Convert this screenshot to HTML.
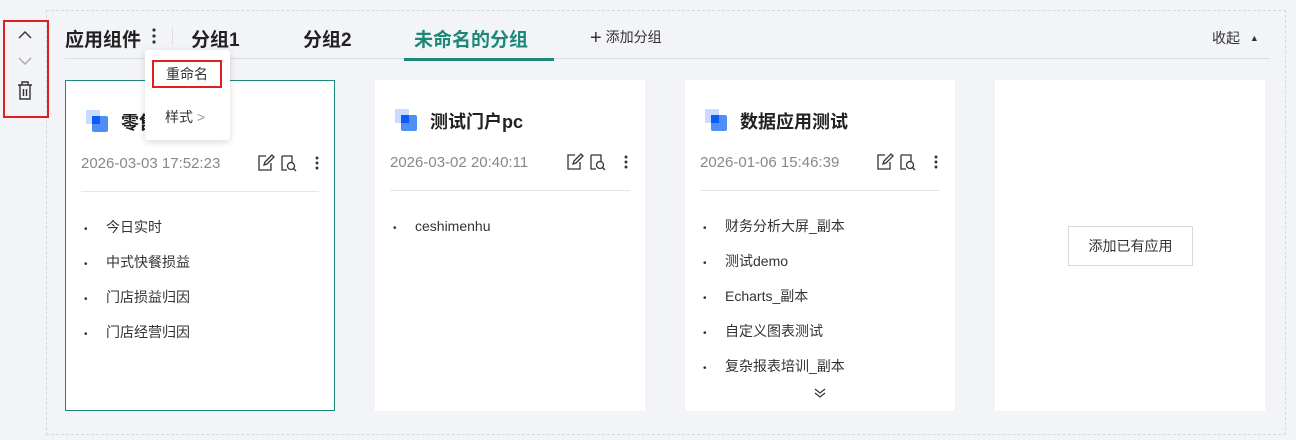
<!DOCTYPE html><html><head><meta charset="utf-8"><style>
*{margin:0;padding:0;box-sizing:border-box}
body{width:1296px;height:440px;background:#f3f4f8;font-family:"Liberation Sans","Noto Sans CJK SC",sans-serif;position:relative;overflow:hidden;color:#222}
.a{position:absolute}
.dash{left:46px;top:10px;width:1240px;height:425px;border:1px dashed #d6d8de}
.card{position:absolute;top:80px;width:270px;height:331px;background:#fff}
.title{position:absolute;left:55px;top:28px;font-size:18px;font-weight:bold;color:#222}
.date{position:absolute;left:15px;top:74px;font-size:15px;color:#888}
.hr{position:absolute;left:15px;right:15px;top:110px;border-top:1px solid #e5e6ea}
.ico{position:absolute;left:20px;top:29px;width:22px;height:22px}
ul{position:absolute;left:18px;top:135px;list-style:none;font-size:14px;color:#333}
li{height:35px;line-height:22px}
li:before{content:"•";display:inline-block;width:22px;font-size:10px}
.tools{position:absolute;left:192px;top:72px}
.h{font-size:19px;font-weight:bold;top:25px}
</style></head><body>
<div class="a dash"></div>
<div class="a" style="left:3px;top:20px;width:46px;height:98px;border:2px solid #e02020"></div>
<svg class="a" style="left:17px;top:28px" width="16" height="80" fill="none" stroke-width="1.4">
<path d="M2 10L8 4L14 10" stroke="#333"/><path d="M2 30L8 36L14 30" stroke="#aaa"/>
<path d="M1 57H15M5 57V54H11V57M3 57V71H13V57M6.5 61V68M9.5 61V68" stroke="#333"/></svg>
<div class="a h" style="left:65px">应用组件</div>
<svg class="a" style="left:151px;top:27px" width="6" height="18"><circle cx="3" cy="3" r="1.6" fill="#333"/><circle cx="3" cy="9" r="1.6" fill="#333"/><circle cx="3" cy="15" r="1.6" fill="#333"/></svg>
<div class="a" style="left:172px;top:28px;width:1px;height:16px;background:#ddd"></div>
<div class="a h" style="left:191px">分组1</div>
<div class="a h" style="left:303px">分组2</div>
<div class="a h" style="left:414px;color:#1d8878">未命名的分组</div>
<div class="a" style="left:590px;top:27px;font-size:14px;color:#333"><span style="font-size:20px;vertical-align:-2px;font-weight:300">+</span> 添加分组</div>
<div class="a" style="left:1212px;top:28px;font-size:14px;color:#333">收起 <span style="font-size:9px;vertical-align:2px;margin-left:6px">▲</span></div>
<div class="a" style="left:65px;top:58px;width:1205px;height:1px;background:#dcdde2"></div>
<div class="a" style="left:404px;top:58px;width:150px;height:3px;background:#1d8878"></div>

<div class="card" style="left:65px;border:1px solid #1d8878">
<svg class="ico"><rect x="0" y="0" width="14" height="14" fill="#c9dcff"/><rect x="6" y="6" width="16" height="16" rx="2" fill="#4f8ef7"/><rect x="6" y="6" width="8" height="8" fill="#0a5cf5"/></svg>
<div class="title" style="left:55px">零售_…</div>
<div class="date">2026-03-03 17:52:23</div>
<svg class="tools" width="70" height="20" fill="none" stroke="#333" stroke-width="1.3"><path d="M8 3H1V17H13V10M6 12L7 9L14 2L16 4L9 11Z"/><path d="M24 3H34V9M24 3V17H29"/><circle cx="33" cy="13" r="3.5"/><path d="M35.5 15.5L38 18"/><circle cx="59" cy="5" r=".8" fill="#333"/><circle cx="59" cy="10" r=".8" fill="#333"/><circle cx="59" cy="15" r=".8" fill="#333"/></svg>
<div class="hr"></div>
<ul><li>今日实时</li><li>中式快餐损益</li><li>门店损益归因</li><li>门店经营归因</li></ul>
</div>
<div class="card" style="left:375px">
<svg class="ico"><rect x="0" y="0" width="14" height="14" fill="#c9dcff"/><rect x="6" y="6" width="16" height="16" rx="2" fill="#4f8ef7"/><rect x="6" y="6" width="8" height="8" fill="#0a5cf5"/></svg>
<div class="title">测试门户pc</div>
<div class="date">2026-03-02 20:40:11</div>
<svg class="tools" width="70" height="20" fill="none" stroke="#333" stroke-width="1.3"><path d="M8 3H1V17H13V10M6 12L7 9L14 2L16 4L9 11Z"/><path d="M24 3H34V9M24 3V17H29"/><circle cx="33" cy="13" r="3.5"/><path d="M35.5 15.5L38 18"/><circle cx="59" cy="5" r=".8" fill="#333"/><circle cx="59" cy="10" r=".8" fill="#333"/><circle cx="59" cy="15" r=".8" fill="#333"/></svg>
<div class="hr"></div>
<ul><li>ceshimenhu</li></ul>
</div>
<div class="card" style="left:685px">
<svg class="ico"><rect x="0" y="0" width="14" height="14" fill="#c9dcff"/><rect x="6" y="6" width="16" height="16" rx="2" fill="#4f8ef7"/><rect x="6" y="6" width="8" height="8" fill="#0a5cf5"/></svg>
<div class="title">数据应用测试</div>
<div class="date">2026-01-06 15:46:39</div>
<svg class="tools" width="70" height="20" fill="none" stroke="#333" stroke-width="1.3"><path d="M8 3H1V17H13V10M6 12L7 9L14 2L16 4L9 11Z"/><path d="M24 3H34V9M24 3V17H29"/><circle cx="33" cy="13" r="3.5"/><path d="M35.5 15.5L38 18"/><circle cx="59" cy="5" r=".8" fill="#333"/><circle cx="59" cy="10" r=".8" fill="#333"/><circle cx="59" cy="15" r=".8" fill="#333"/></svg>
<div class="hr"></div>
<ul><li>财务分析大屏_副本</li><li>测试demo</li><li>Echarts_副本</li><li>自定义图表测试</li><li>复杂报表培训_副本</li></ul>
<svg class="a" style="left:129px;top:307px" width="12" height="12" fill="none" stroke="#333" stroke-width="1.2"><path d="M1 2L6 6L11 2M1 6L6 10L11 6"/></svg>
</div>
<div class="card" style="left:995px">
<div class="a" style="left:73px;top:146px;width:125px;height:40px;border:1px solid #d8d8d8;font-size:14px;line-height:38px;text-align:center;color:#333">添加已有应用</div>
</div>

<div class="a" style="left:145px;top:50px;width:85px;height:90px;background:#fff;box-shadow:0 2px 8px rgba(0,0,0,.15);border-radius:3px"></div>
<div class="a" style="left:152px;top:60px;width:70px;height:28px;border:2px solid #e02020;font-size:14px;line-height:24px;text-align:center;color:#333">重命名</div>
<div class="a" style="left:165px;top:107px;font-size:14px;color:#333">样式 <span style="color:#999">&gt;</span></div>
</body></html>
